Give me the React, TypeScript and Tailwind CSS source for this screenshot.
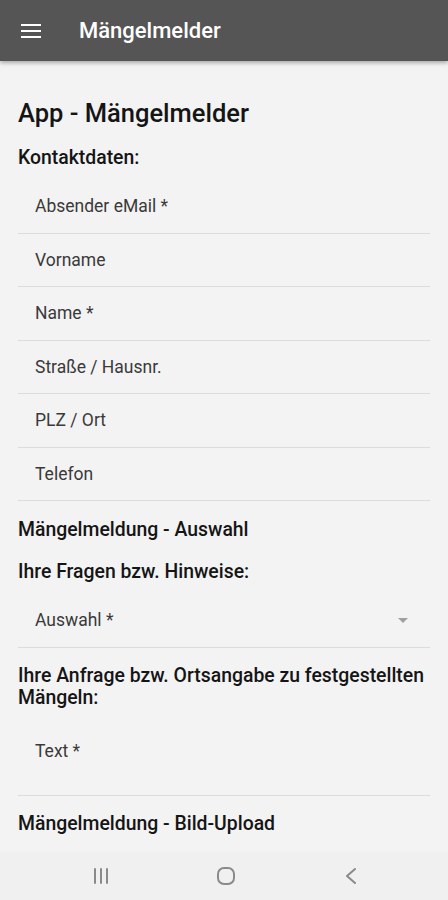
import React from 'react';

const contactFields = ['Absender eMail *', 'Vorname', 'Name *', 'Straße / Hausnr.', 'PLZ / Ort', 'Telefon'];

function Field({ label }: { label: string }) {
  return (
    <div className="flex h-[53.5px] items-center border-b border-[#dcdcdc] pl-[17px] text-[17.5px] text-[#3a3a3a]">
      {label}
    </div>
  );
}

export default function App() {
  return (
    <div
      className="flex h-[900px] w-[448px] flex-col overflow-hidden bg-[#f3f3f3]"
      style={{ fontFamily: 'Roboto, "Noto Sans", sans-serif' }}
    >
      {/* App-Leiste */}
      <header className="relative z-10 flex h-[61px] shrink-0 items-center bg-[#555555] shadow-[0_2px_4px_rgba(0,0,0,0.3)]">
        <div className="ml-[21px] flex w-[20px] flex-col gap-[4px]">
          <span className="h-[2px] bg-white" />
          <span className="h-[2px] bg-white" />
          <span className="h-[2px] bg-white" />
        </div>
        <h1 className="ml-[38px] text-[22px] font-medium text-white">Mängelmelder</h1>
      </header>

      {/* Formular */}
      <main className="flex-1 overflow-hidden px-[18px] text-[#151515]">
        <h2 className="mt-[36px] text-[25.5px] leading-[32px] font-medium">App - Mängelmelder</h2>
        <h3 className="mt-[17px] text-[19.4px] leading-[24px] font-medium">Kontaktdaten:</h3>

        <div className="mt-[10px]">
          {contactFields.map((f) => (
            <Field key={f} label={f} />
          ))}
        </div>

        <h3 className="mt-[17px] text-[19.4px] leading-[24px] font-medium">Mängelmeldung - Auswahl</h3>
        <h3 className="mt-[18px] text-[19.4px] leading-[24px] font-medium">Ihre Fragen bzw. Hinweise:</h3>

        <div className="mt-[10px] flex h-[53.5px] items-center justify-between border-b border-[#dcdcdc] pl-[17px] pr-[22px] text-[17.5px] text-[#3a3a3a]">
          <span>Auswahl *</span>
          <span className="h-0 w-0 border-x-[5px] border-t-[5px] border-x-transparent border-t-[#a0a0a0]" />
        </div>

        <h3 className="mt-[17px] text-[19.4px] leading-[22px] font-medium">
          Ihre Anfrage bzw. Ortsangabe zu festgestellten Mängeln:
        </h3>

        <div className="mt-[10px] h-[77px] border-b border-[#dcdcdc] pl-[17px] pt-[20px] text-[17.5px] leading-[24px] text-[#3a3a3a]">
          Text *
        </div>

        <h3 className="mt-[16px] text-[19.4px] leading-[24px] font-medium">Mängelmeldung - Bild-Upload</h3>
      </main>

      {/* Navigationsleiste */}
      <nav className="flex h-[48px] shrink-0 items-center gap-[105px] bg-[#f0f0f0] pl-[91px]">
        <svg width="20" height="18" viewBox="0 0 20 18" className="text-[#8a8a8a]">
          <path d="M4 2v14M10 2v14M16 2v14" stroke="currentColor" strokeWidth="2" strokeLinecap="round" />
        </svg>
        <svg width="20" height="20" viewBox="0 0 20 20" className="text-[#8a8a8a]">
          <rect x="2" y="2" width="16" height="16" rx="6" fill="none" stroke="currentColor" strokeWidth="2" />
        </svg>
        <svg width="20" height="20" viewBox="0 0 20 20" className="text-[#8a8a8a]">
          <path d="M14 3l-8 7 8 7" fill="none" stroke="currentColor" strokeWidth="2" strokeLinecap="round" strokeLinejoin="round" />
        </svg>
      </nav>
    </div>
  );
}
